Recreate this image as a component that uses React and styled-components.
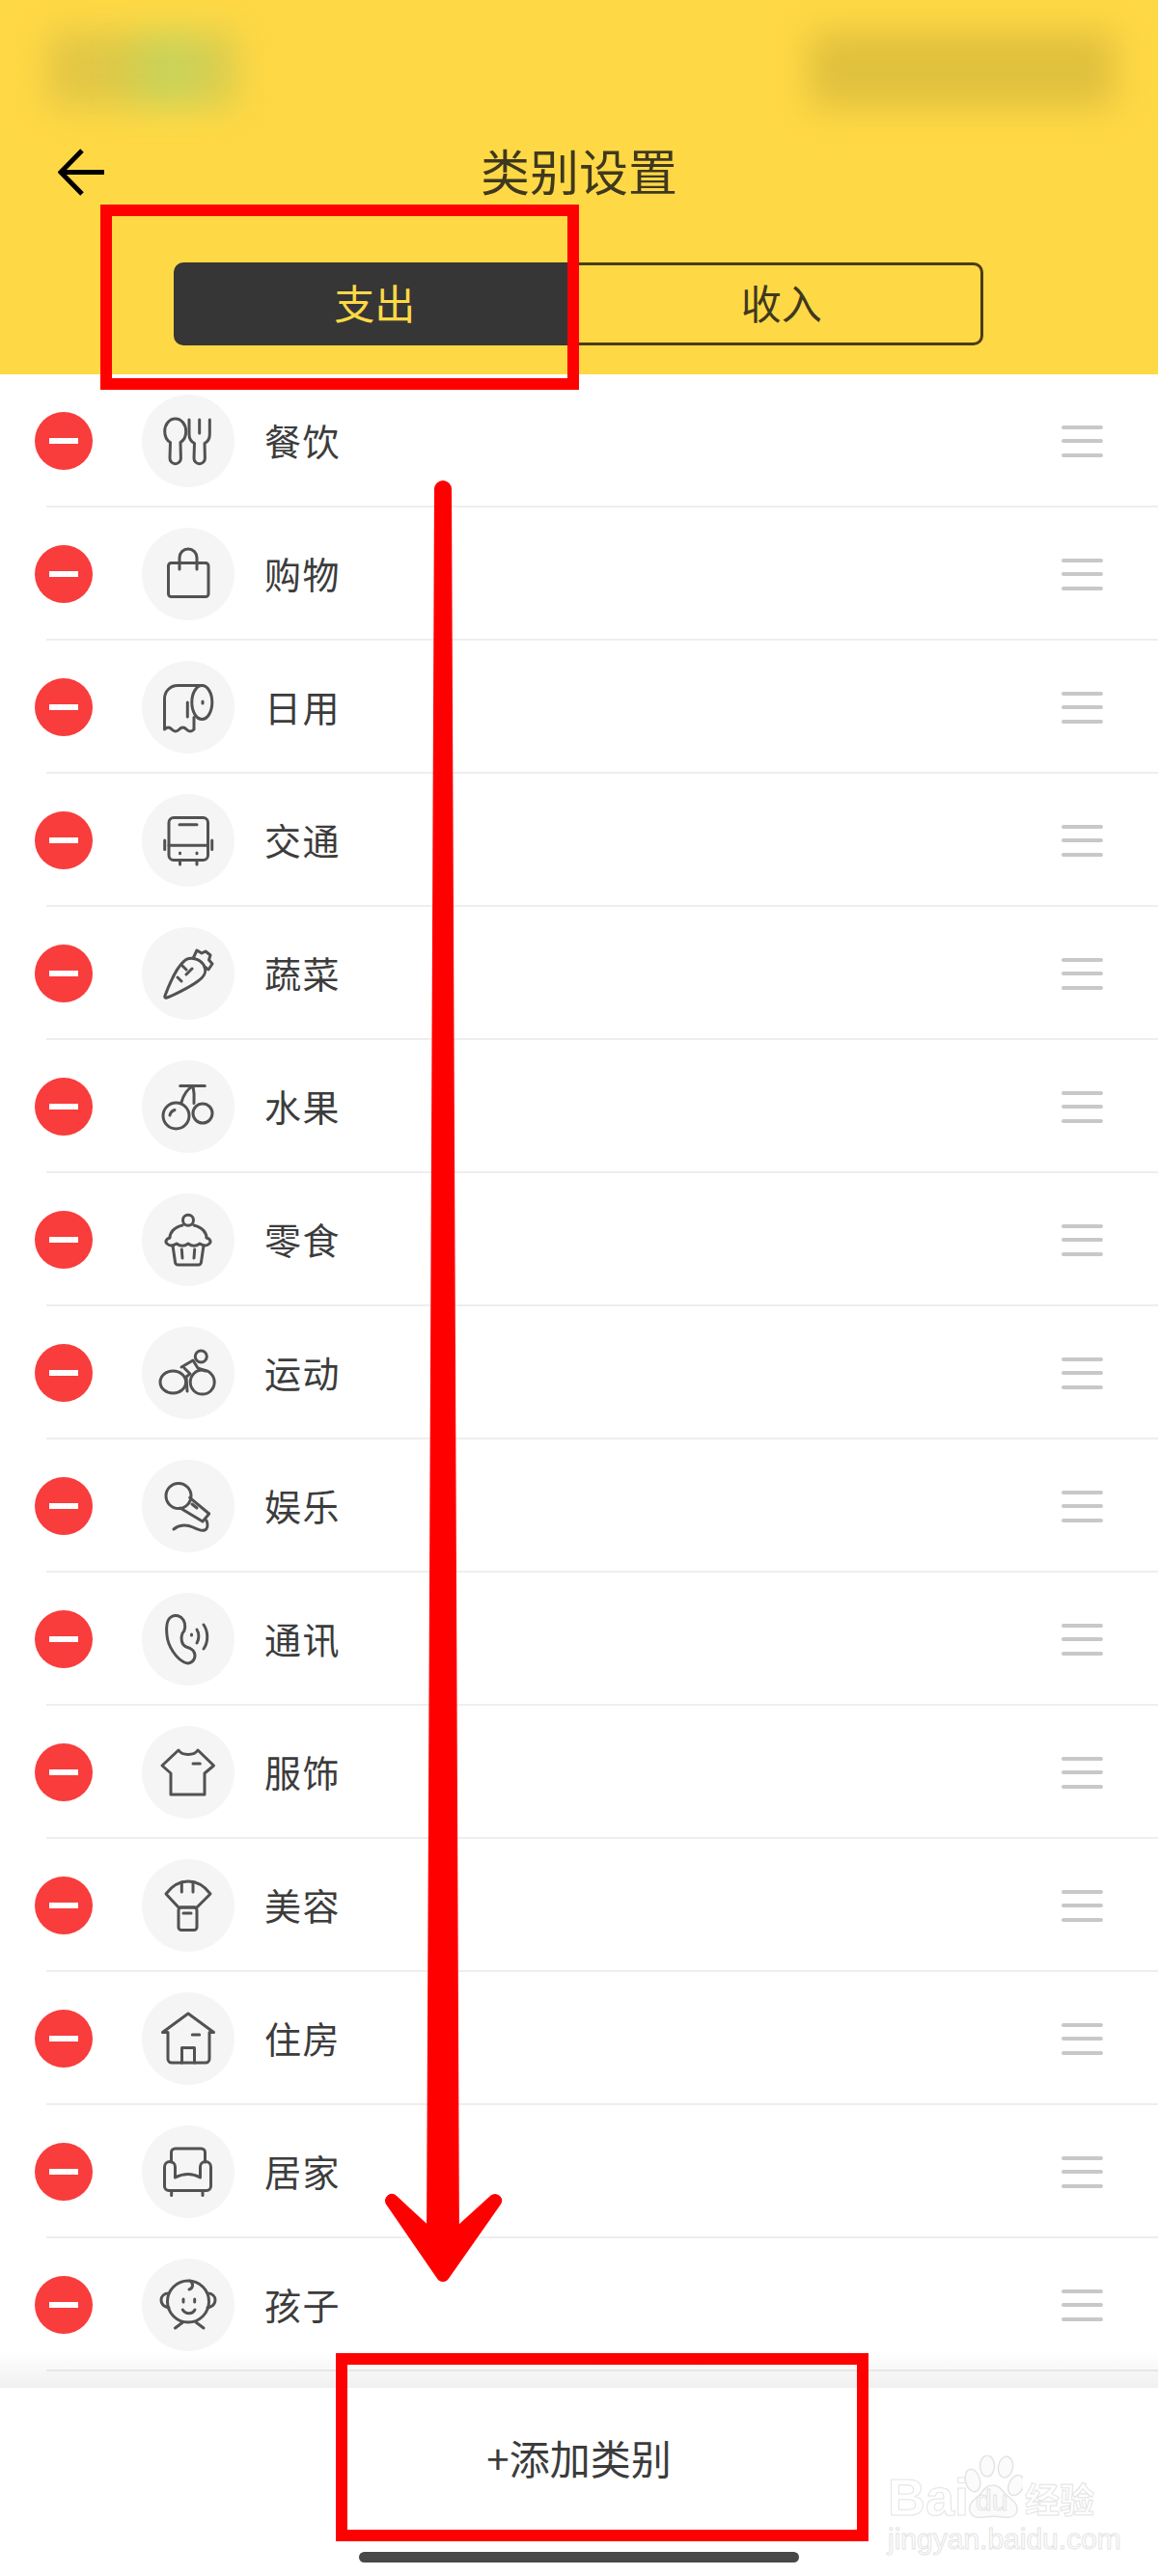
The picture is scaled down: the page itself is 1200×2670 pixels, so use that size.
import styled, { createGlobalStyle } from "styled-components";

const categories = [
  {
    name: "餐饮",
    icon: (
      <>
        <path d="M34.7 25c-6 0-11 5.8-11 13 0 5.5 2.2 9.5 5.8 11.5L29 66a5.7 5.7 0 0 0 11.4 0L40 49.5c3.5-2 5.7-6 5.7-11.5 0-7.2-5-13-11-13z" />
        <path d="M49 26v15c0 5 2.5 8 5.5 9.5L54 66a5.7 5.7 0 0 0 11.4 0L65 50.5c3-1.5 5.3-4.5 5.3-9.5V26M59.7 26v14" />
      </>
    ),
  },
  {
    name: "购物",
    icon: (
      <>
        <rect x="27.5" y="36.5" width="41.5" height="35" rx="3" />
        <path d="M39 43V31a9 9 0 0 1 18 0v12" />
      </>
    ),
  },
  {
    name: "日用",
    icon: (
      <>
        <ellipse cx="62.3" cy="43" rx="10.5" ry="17.5" />
        <path d="M62 25.500H37a13.500 13.500 0 0 0-13.500 13.500V71q3.800-4 7.600 0t7.600 0 7.600 0 7.700 0V58.500" />
        <path d="M47.300 43v15M63 42v2" />
      </>
    ),
  },
  {
    name: "交通",
    icon: (
      <>
        <rect x="28" y="24.500" width="40.500" height="44" rx="5" />
        <path d="M28 53.200h40.500M39 31.800h18M23.700 48v9.500M72.700 48v9.500M39.500 68.500V73M57 68.500V73M39.500 61v.8M57 61v.8" />
      </>
    ),
  },
  {
    name: "蔬菜",
    icon: (
      <>
        <path d="M24 71C30 55 38 40 44 35c6-5.500 16-2 20 4 4 7 1 12-6 17-8 6-28 16-32 17-2 .5-2.500-.5-2-2z" />
        <path d="M53.500 31.500L57 24l5 3 4-2 5 4-1.500 5 3.500 4-4 6-4-3M42 40l4 4M52 43l-6 6M37 52l4 4" />
      </>
    ),
  },
  {
    name: "水果",
    icon: (
      <>
        <circle cx="35.500" cy="57.500" r="13.500" />
        <circle cx="63" cy="55" r="10" />
        <path d="M39.700 26.500h25.600M53 26.500C47 30 43 36 41 43.500M53 26.500c1 5 1.500 12 1 18M29 57c.5-3 2-4.500 5-5.500" />
      </>
    ),
  },
  {
    name: "零食",
    icon: (
      <>
        <circle cx="48" cy="27.800" r="5.500" />
        <path d="M42 33c-9 2-13 8-13 13-4 1-5 4-3 6 3 3 7 2 10 0 4 3 8 3 12 0 4 3 8 3 12 0 3 2 7 3 10 0 2-2 1-5-3-6 0-5-4-11-13-13" />
        <path d="M32 54l2.500 17a3 3 0 0 0 3 3h21a3 3 0 0 0 3-3L64 54M41.300 58l.7 9M54.700 58l-.7 9" />
      </>
    ),
  },
  {
    name: "运动",
    icon: (
      <>
        <ellipse cx="32.300" cy="57.600" rx="13.300" ry="11.500" />
        <circle cx="62.700" cy="57.600" r="12.500" />
        <circle cx="61.300" cy="31" r="6" />
        <path d="M41 42l12-7 5 8 8 3M44 43l6 6-4 3 1 15" />
      </>
    ),
  },
  {
    name: "娱乐",
    icon: (
      <>
        <circle cx="38" cy="37.500" r="13" />
        <path d="M49.700 39.300L69.700 56 63 64 39.700 50M52 46l5 4" />
        <path d="M33 72c6-5 14-5 20-2 4 2 9 4 12 3 3-1 4-5 2-10" />
      </>
    ),
  },
  {
    name: "通讯",
    icon: (
      <>
        <path d="M31 24.500C26 27 25 35 26 44c1 12 10 24 18 28 6 3 11-2 11-7s-5-8-9-9c-5-2-6-9-4-14 3-3 4-9 1-14-3-4.500-8-5.500-12-3.500z" />
        <path d="M57 38c2.500 4 2.500 10 0 14M64 33c5 7 5 18 0 25M51.500 43v1" />
      </>
    ),
  },
  {
    name: "服饰",
    icon: (
      <>
        <path d="M38 25c4 6 16 6 20 0l16.500 16L65 49v22H30V49l-9-8z" />
        <path d="M53 39h7.300" />
      </>
    ),
  },
  {
    name: "美容",
    icon: (
      <>
        <path d="M25 36c6-8 14-13 23-13s17 5 23 13L57 50H38z" />
        <rect x="38" y="50" width="19" height="23.500" rx="3" />
        <path d="M41.300 24v10M53 24v10M43 56h8" />
      </>
    ),
  },
  {
    name: "住房",
    icon: (
      <>
        <path d="M48 22L21.500 41.500H27V69a4 4 0 0 0 4 4h35a4 4 0 0 0 4-4V41.500h4.500z" />
        <path d="M41.500 73V57.500h13V73M52.300 44h7.400" />
      </>
    ),
  },
  {
    name: "居家",
    icon: (
      <>
        <path d="M30.500 38V28a4 4 0 0 1 4-4h27a4 4 0 0 1 4 4v10" />
        <path d="M29 37.500a5.500 5.500 0 0 0-5.500 5.500v20a4.500 4.500 0 0 0 4.500 4.500h39a4.500 4.500 0 0 0 4.500-4.500V43a5.500 5.500 0 0 0-11 0v11Q48 47 34.500 54V43a5.500 5.500 0 0 0-5.500-5.500z" />
        <path d="M30.700 68v4.500M63 68v4.500" />
      </>
    ),
  },
  {
    name: "孩子",
    icon: (
      <>
        <circle cx="48" cy="44.500" r="21.500" />
        <path d="M28 36c-5 0-8 3-8 7s3 7 8 8M68 36c5 0 8 3 8 7s-3 7-8 8M50 23c4 3 3 8-1 9M43 42v3M54.700 42v3M42.300 53c3 5 10 5 12.700 0M34.500 72l8-6M64 72l-8-6" />
      </>
    ),
  },
];

export default function App() {
  return (
    <Page>
      <GlobalStyle />
      <Header>
        <StatusBar>
          <CarrierBlur />
          <BatteryBlur />
        </StatusBar>
        <TitleRow>
          <BackIcon viewBox="0 0 50 50">
            <path d="M48 24.500H6M25 2L3 24.500 25 47" />
          </BackIcon>
          <Title>类别设置</Title>
        </TitleRow>
        <Tabs>
          <Tab $active>支出</Tab>
          <Tab>收入</Tab>
        </Tabs>
      </Header>

      <List>
        {categories.map((item) => (
          <Row key={item.name}>
            <RemoveButton />
            <IconCircle>
              <CategoryIcon viewBox="0 0 96 96">{item.icon}</CategoryIcon>
            </IconCircle>
            <Label>{item.name}</Label>
            <DragHandle>
              <span />
              <span />
              <span />
            </DragHandle>
          </Row>
        ))}
      </List>

      <Footer>
        <AddText>+添加类别</AddText>
        <HomeBar />
        <Watermark>
          <WatermarkTop>
            <WatermarkWord>Bai</WatermarkWord>
            <Paw>
              <svg viewBox="0 0 62 66" width="62" height="66">
                <ellipse cx="10" cy="26" rx="7.500" ry="12" transform="rotate(-15 10 26)" />
                <ellipse cx="25" cy="11" rx="7.500" ry="11" />
                <ellipse cx="44" cy="12" rx="7.500" ry="11" transform="rotate(10 44 12)" />
                <ellipse cx="55" cy="31" rx="7.500" ry="11" transform="rotate(25 55 31)" />
                <path d="M31 31c-8 0-11 7-15 11-6 5-11 9-9 16 2 6 8 7 14 6 6-1 14-1 21 0 7 1 13-1 14-7 1-7-5-11-10-15-5-4-7-11-15-11z" />
              </svg>
              <PawText>du</PawText>
            </Paw>
            <WatermarkCn>经验</WatermarkCn>
          </WatermarkTop>
          <WatermarkUrl>jingyan.baidu.com</WatermarkUrl>
        </Watermark>
      </Footer>

      <TabHighlight />
      <AddHighlight />
      <ArrowMark viewBox="395 495 130 1875">
        <path d="M450 507a9 9 0 0 1 18 0l8 1823h-34z" />
        <path d="M406 2281l53 49 54-49-54 77z" strokeWidth="14" strokeLinejoin="round" stroke="#ff0000" />
      </ArrowMark>
    </Page>
  );
}

const GlobalStyle = createGlobalStyle`
  body {
    margin: 0;
    background: #ffffff;
    font-family: "Noto Sans CJK SC", "Noto Sans", sans-serif;
  }
`;

const Page = styled.div`
  position: relative;
  width: 1200px;
  height: 2670px;
  display: flex;
  flex-direction: column;
  overflow: hidden;
  background: #ffffff;
`;

const Header = styled.header`
  position: relative;
  z-index: 1;
  flex: none;
  height: 388px;
  box-sizing: border-box;
  background: #ffd945;
  overflow: hidden;
`;

const StatusBar = styled.div`
  height: 150px;
  box-sizing: border-box;
  padding: 32px 44px 0 48px;
  display: flex;
  justify-content: space-between;
  align-items: flex-start;
`;

const CarrierBlur = styled.div`
  width: 200px;
  height: 80px;
  background: linear-gradient(90deg, #e6c544 0%, #dcc948 40%, #c4d45c 62%, #e2cb4a 100%);
  filter: blur(18px);
`;

const BatteryBlur = styled.div`
  width: 318px;
  height: 80px;
  background: #e0c03e;
  filter: blur(18px);
`;

const TitleRow = styled.div`
  height: 58px;
  display: grid;
  grid-template-columns: 1fr auto 1fr;
  align-items: center;
  padding-left: 60px;
  padding-right: 60px;
`;

const BackIcon = styled.svg`
  width: 50px;
  height: 50px;
  fill: none;
  stroke: #000000;
  stroke-width: 5;
`;

const Title = styled.h1`
  margin: 0;
  padding-bottom: 5px;
  font-size: 51px;
  font-weight: 400;
  line-height: 53px;
  color: #3f3820;
`;

const Tabs = styled.div`
  display: flex;
  width: 839px;
  height: 86px;
  margin: 64px 0 0 180px;
`;

const Tab = styled.div`
  flex: 1;
  box-sizing: border-box;
  display: flex;
  align-items: center;
  justify-content: center;
  padding-bottom: 5px;
  padding-left: ${(p) => (p.$active ? "2px" : "6px")};
  font-size: 42px;
  color: ${(p) => (p.$active ? "#ffd945" : "#3f3820")};
  background: ${(p) => (p.$active ? "#363636" : "transparent")};
  border: ${(p) => (p.$active ? "none" : "3px solid #4a3c12")};
  border-radius: ${(p) => (p.$active ? "10px 0 0 10px" : "0 10px 10px 0")};
`;

const List = styled.ul`
  flex: 1;
  min-height: 0;
  margin: 0;
  padding: 0;
  list-style: none;
  overflow: hidden;
`;

const Row = styled.li`
  height: 138px;
  box-sizing: border-box;
  margin-left: 48px;
  padding: 2px 57px 0 0;
  display: flex;
  align-items: center;
  border-bottom: 2px solid #eeeeee;
`;

const RemoveButton = styled.div`
  flex: none;
  position: relative;
  width: 60px;
  height: 60px;
  margin-left: -12px;
  border-radius: 50%;
  background: #f93c3c;

  &::after {
    content: "";
    position: absolute;
    left: 15px;
    top: 27px;
    width: 30px;
    height: 6px;
    background: #ffffff;
  }
`;

const IconCircle = styled.div`
  flex: none;
  width: 96px;
  height: 96px;
  margin-left: 51px;
  border-radius: 50%;
  background: #f5f5f5;
`;

const CategoryIcon = styled.svg`
  display: block;
  width: 96px;
  height: 96px;
  fill: none;
  stroke: #525252;
  stroke-width: 3;
  stroke-linecap: round;
  stroke-linejoin: round;
`;

const Label = styled.span`
  flex: 1;
  margin-left: 31px;
  padding-bottom: 4px;
  font-size: 38px;
  letter-spacing: 1.500px;
  color: #3c3c3c;
`;

const DragHandle = styled.div`
  flex: none;
  width: 43px;
  display: flex;
  flex-direction: column;
  gap: 10.500px;

  span {
    display: block;
    height: 4px;
    border-radius: 2px;
    background: #c8c8c8;
  }
`;

const Footer = styled.footer`
  position: relative;
  z-index: 1;
  flex: none;
  height: 195px;
  box-sizing: border-box;
  padding: 47px 0 14px;
  display: flex;
  flex-direction: column;
  align-items: center;
  justify-content: space-between;
  background: #ffffff;

  &::before {
    content: "";
    position: absolute;
    left: 0;
    right: 0;
    bottom: 100%;
    height: 38px;
    background: linear-gradient(180deg, rgba(0, 0, 0, 0), rgba(0, 0, 0, 0.06));
  }
`;

const AddText = styled.div`
  font-size: 42px;
  line-height: 50px;
  color: #3c3c3c;
`;

const HomeBar = styled.div`
  width: 456px;
  height: 11px;
  border-radius: 6px;
  background: #484848;
`;

const Watermark = styled.div`
  position: absolute;
  left: 920px;
  top: 68px;
  width: 216px;
  display: flex;
  flex-direction: column;
  color: transparent;
  -webkit-text-stroke: 1px #e4e4e4;
  font-family: "Liberation Sans", sans-serif;
`;

const WatermarkTop = styled.div`
  display: flex;
  align-items: flex-end;
  height: 68px;
`;

const WatermarkWord = styled.span`
  width: 78px;
  font-size: 54px;
  font-weight: 700;
  line-height: 46px;
`;

const Paw = styled.div`
  position: relative;
  width: 62px;
  height: 66px;

  svg {
    fill: #fbfbfb;
    stroke: #e4e4e4;
    stroke-width: 1.500;
  }
`;

const PawText = styled.span`
  position: absolute;
  left: 13px;
  bottom: 4px;
  font-size: 30px;
  line-height: 30px;
`;

const WatermarkCn = styled.span`
  margin-left: 2px;
  font-family: "Noto Sans CJK SC", sans-serif;
  font-size: 36px;
  font-weight: 700;
  line-height: 44px;
  white-space: nowrap;
`;

const WatermarkUrl = styled.span`
  margin-top: 6px;
  font-size: 30px;
  line-height: 30px;
  white-space: nowrap;
`;

const TabHighlight = styled.div`
  position: absolute;
  z-index: 2;
  left: 104px;
  top: 212px;
  width: 496px;
  height: 192px;
  box-sizing: border-box;
  border: 12px solid #ff0000;
`;

const AddHighlight = styled.div`
  position: absolute;
  z-index: 2;
  left: 348px;
  top: 2439px;
  width: 552px;
  height: 195px;
  box-sizing: border-box;
  border: 12px solid #ff0000;
`;

const ArrowMark = styled.svg`
  position: absolute;
  z-index: 2;
  left: 395px;
  top: 495px;
  width: 130px;
  height: 1875px;
  fill: #ff0000;
`;
